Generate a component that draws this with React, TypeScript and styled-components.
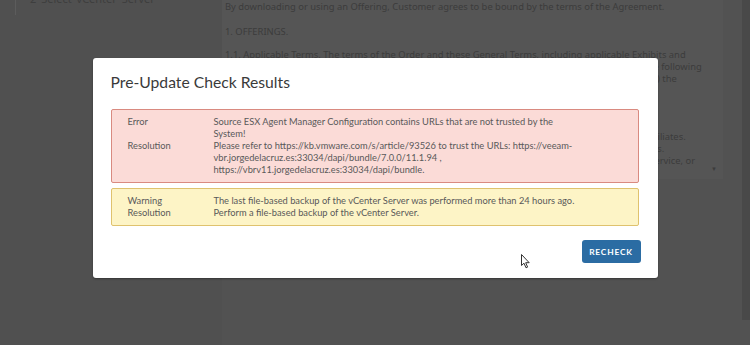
import React from "react";
import styled, { createGlobalStyle } from "styled-components";

const GlobalStyle = createGlobalStyle`
  html, body {
    margin: 0;
    padding: 0;
    background: #525252;
    overflow: hidden;
  }
`;

const Page = styled.div`
  position: relative;
  width: 750px;
  height: 345px;
  overflow: hidden;
  background: #525252;
  font-family: "Noto Sans", "Open Sans", sans-serif;
`;

const Backdrop = styled.div`
  display: grid;
  grid-template-columns: 222px 501px 19px 8px;
  height: 100%;
`;

const StepsPane = styled.div`
  position: relative;
  background: #505050;
`;

const StepLine = styled.div`
  margin-left: 15px;
  width: 1px;
  height: 15px;
  background: #5c5c5c;
`;

const StepLabel = styled.div`
  position: absolute;
  top: -9px;
  left: 30px;
  font-size: 11px;
  color: #3e3e3e;
  white-space: nowrap;
  word-spacing: 2px;
`;

const TermsBox = styled.div`
  align-self: start;
  height: 179px;
  box-sizing: border-box;
  background: #555555;
  padding: 0 0 12px 3px;
  position: relative;
  color: #3c3c3c;
  font-size: 9.4px;
  line-height: 12px;
`;

const TermsScroll = styled.div`
  height: 100%;
  overflow: hidden;
`;

const TermsPara = styled.div<{ $gap?: number }>`
  margin-top: ${(p) => p.$gap ?? 11}px;
  white-space: nowrap;
`;

const ScrollArrow = styled.span`
  position: absolute;
  right: 6px;
  bottom: 4px;
  font-size: 6px;
  color: #3c3c3c;
`;

const Strip = styled.div`
  height: 320px;
  background: #494949;
`;

const Layer = styled.div`
  position: absolute;
  inset: 0;
  display: flex;
  justify-content: center;
  align-items: flex-start;
  padding-top: 58px;
`;

const Modal = styled.div`
  width: 565px;
  box-sizing: border-box;
  background: #ffffff;
  border-radius: 3px;
  box-shadow: 0 1px 2px rgba(0, 0, 0, 0.35);
  padding: 12px 19px 15px 18px;
  font-family: "Lato", "Open Sans", sans-serif;
`;

const Title = styled.h3`
  margin: 0;
  font-size: 15.7px;
  font-weight: 400;
  line-height: 24px;
  color: #3a3a3a;
`;

const Alerts = styled.div`
  margin-top: 15px;
  display: flex;
  flex-direction: column;
  gap: 5px;
`;

const Alert = styled.div<{ $kind: "danger" | "warning" }>`
  background: ${(p) => (p.$kind === "danger" ? "#fbdbd7" : "#fdf4c6")};
  border: 1px solid ${(p) => (p.$kind === "danger" ? "#d98a80" : "#dfc26e")};
  border-radius: 2px;
  padding: 6px 16px;
  display: grid;
  grid-template-columns: 86px 1fr;
  font-size: 9.3px;
  line-height: 12px;
  color: #595959;
`;

const Label = styled.div``;

const Message = styled.div`
  white-space: nowrap;
`;

const Footer = styled.div`
  display: flex;
  justify-content: flex-end;
  margin-top: 14px;
  margin-right: -2px;
`;

const Button = styled.button`
  height: 23px;
  width: 59px;
  border: none;
  border-radius: 3px;
  background: #2b6ca3;
  color: #ffffff;
  font-family: "Lato", "Open Sans", sans-serif;
  font-size: 8.4px;
  font-weight: 700;
  letter-spacing: 0.8px;
  padding: 0;
  cursor: pointer;
`;

const Pointer = styled.svg`
  position: absolute;
  left: 521px;
  top: 254px;
`;

const App = () => {
  return (
    <>
      <GlobalStyle />
      <Page>
        <Backdrop>
          <StepsPane>
            <StepLine />
            <StepLabel>2 Select vCenter Server</StepLabel>
          </StepsPane>
          <TermsBox>
            <TermsScroll>
              <TermsPara $gap={1}>
                By downloading or using an Offering, Customer agrees to be bound by the terms of the Agreement.
              </TermsPara>
              <TermsPara $gap={13}>1. OFFERINGS.</TermsPara>
              <TermsPara>
                1.1. Applicable Terms. The terms of the Order and these General Terms, including applicable Exhibits and
                <br />
                Offering-specific Notes (collectively, the &quot;Agreement&quot;) govern Customer&apos;s use of each Offering. The following
                <br />
                order of precedence will apply: (a) the Order; (b) the Exhibits; (c) the Offering-specific Notes; and (d) the
                <br />
                General Terms.
              </TermsPara>
              <TermsPara>
                1.2. Users. Customer is responsible for its Users&apos; compliance with the Agreement.
              </TermsPara>
              <TermsPara>
                1.3. Restrictions. Customer may use Offerings only for its own internal business use and that of Affiliates.
                <br />
                Customer may not resell or sublicense its rights to the Offerings or to any one of these Deliverables.
                <br />
                Customer may not use the Offerings in an application service provider, service bureau, hosted IT service, or
                <br />
                similar capacity for third parties.
              </TermsPara>
            </TermsScroll>
            <ScrollArrow>▼</ScrollArrow>
          </TermsBox>
          <div />
          <Strip />
        </Backdrop>

        <Layer>
          <Modal>
            <Title>Pre-Update Check Results</Title>
            <Alerts>
              <Alert $kind="danger">
                <Label>Error</Label>
                <Message>
                  Source ESX Agent Manager Configuration contains URLs that are not trusted by the
                  <br />
                  System!
                </Message>
                <Label>Resolution</Label>
                <Message>
                  Please refer to https://kb.vmware.com/s/article/93526 to trust the URLs: https://veeam-
                  <br />
                  vbr.jorgedelacruz.es:33034/dapi/bundle/7.0.0/11.1.94 ,
                  <br />
                  https://vbrv11.jorgedelacruz.es:33034/dapi/bundle.
                </Message>
              </Alert>
              <Alert $kind="warning">
                <Label>Warning</Label>
                <Message>
                  The last file-based backup of the vCenter Server was performed more than 24 hours ago.
                </Message>
                <Label>Resolution</Label>
                <Message>Perform a file-based backup of the vCenter Server.</Message>
              </Alert>
            </Alerts>
            <Footer>
              <Button>RECHECK</Button>
            </Footer>
          </Modal>
        </Layer>

        <Pointer width="10" height="15" viewBox="0 0 10 15">
          <path
            d="M0.5 0.5 L0.5 11.5 L3 9.2 L5 13.8 L6.6 13.1 L4.7 8.7 L8.2 8.7 Z"
            fill="#ffffff"
            stroke="#333333"
            strokeWidth="1"
            strokeLinejoin="round"
          />
        </Pointer>
      </Page>
    </>
  );
};

export default App;
